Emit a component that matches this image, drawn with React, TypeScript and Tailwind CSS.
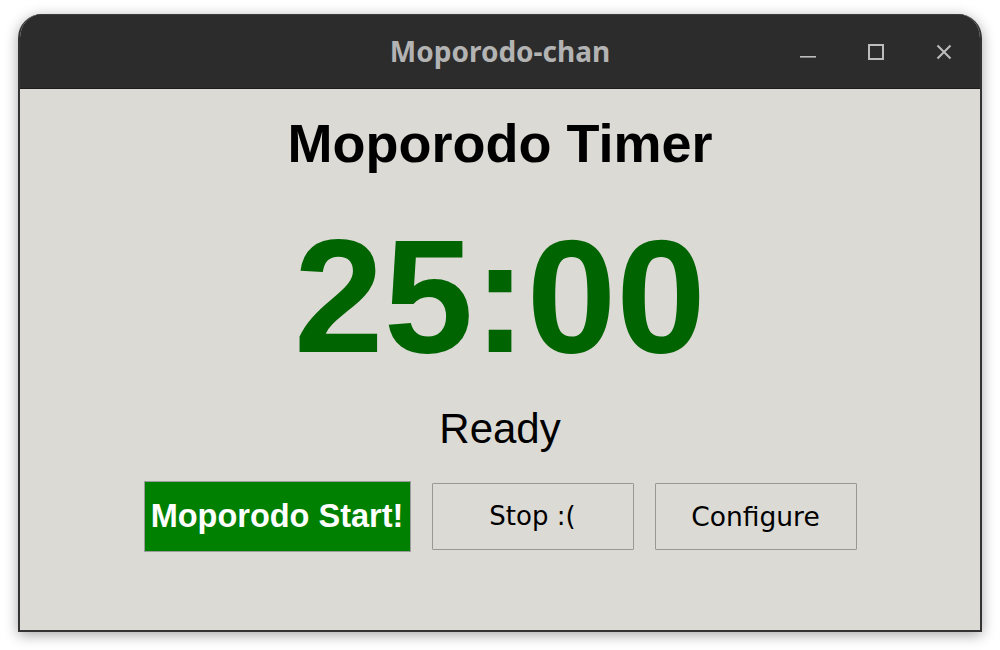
import React from "react";

const sans = { fontFamily: '"Liberation Sans", Arial, sans-serif' };

function TitleIcons() {
  return (
    <div className="flex items-center justify-end gap-[52px] pr-[28px] pt-[1px]">
      <svg width="16" height="16" viewBox="0 0 16 16" aria-hidden>
        <rect x="0" y="12" width="16" height="1.6" fill="#bdbdbd" />
      </svg>
      <svg width="16" height="16" viewBox="0 0 16 16" aria-hidden>
        <rect x="1" y="1" width="14" height="14" fill="none" stroke="#bdbdbd" strokeWidth="2" />
      </svg>
      <svg width="16" height="16" viewBox="0 0 16 16" aria-hidden>
        <path d="M1.5 1.5 L14.5 14.5 M14.5 1.5 L1.5 14.5" stroke="#bdbdbd" strokeWidth="2" />
      </svg>
    </div>
  );
}

export default function App() {
  return (
    <div className="w-[1000px] h-[650px] bg-white pt-[14px] pl-[18px]">
      <div className="flex h-[618px] w-[964px] flex-col overflow-hidden rounded-t-[24px] border-2 border-t-0 border-[#333333] shadow-[0_3px_14px_rgba(0,0,0,0.35)]">
        <div className="grid h-[75px] shrink-0 grid-cols-[1fr_auto_1fr] items-center border-t border-[#3c3c3c] border-b border-b-[#1c1c1c] bg-[#2c2c2c]">
          <div />
          <div
            className="text-[28px] font-bold leading-none text-[#b3b3b3] -mt-[1px]"
            style={{ fontFamily: '"Noto Sans", "Open Sans", sans-serif' }}
          >
            Moporodo-chan
          </div>
          <TitleIcons />
        </div>

        <div className="flex flex-1 flex-col items-center bg-[#dbdad5]" style={sans}>
          <h1 className="mt-[27px] text-[54px] font-bold leading-none text-black">
            Moporodo Timer
          </h1>
          <div className="mt-[46px] text-[161px] font-bold leading-none text-[#006400]">
            25:00
          </div>
          <div className="mt-[31px] text-[42px] leading-none text-black">Ready</div>
          <div className="mt-[31px] flex items-center gap-[21px]">
            <button
              type="button"
              className="flex h-[71px] w-[267px] items-center justify-center border border-[#9c9c9c] bg-[#008000] text-[32.5px] font-bold text-white"
              style={sans}
            >
              Moporodo Start!
            </button>
            <button
              type="button"
              className="flex h-[67px] w-[202px] items-center justify-center rounded-[1px] border border-[#9a9893] bg-[#dcdad5] text-[26px] text-black"
              style={{ fontFamily: '"DejaVu Sans", sans-serif' }}
            >
              Stop :(
            </button>
            <button
              type="button"
              className="flex h-[67px] w-[202px] items-center justify-center rounded-[1px] border border-[#9a9893] bg-[#dcdad5] text-[26.5px] text-black"
              style={{ fontFamily: '"DejaVu Sans", sans-serif' }}
            >
              Configure
            </button>
          </div>
        </div>
      </div>
    </div>
  );
}
